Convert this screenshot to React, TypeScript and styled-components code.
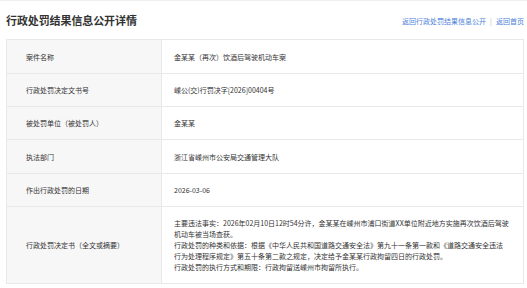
import styled, { createGlobalStyle } from "styled-components";

const GlobalStyle = createGlobalStyle`
    html, body {
        margin: 0;
        padding: 0;
        background: #ffffff;
    }
    body {
        font-family: "Noto Sans CJK SC", "Noto Sans", sans-serif;
        color: #333333;
    }
`

const Page = styled.div`
    width: 527px;
    height: 288px;
    box-sizing: border-box;
    border-top: 1px solid #f0f0f0;
    padding: 0 3px 0 6px;
    overflow: hidden;
`

const Header = styled.div`
    height: 38px;
    display: flex;
    align-items: center;
    justify-content: space-between;
`

const Title = styled.h1`
    margin: 0;
    font-size: 11px;
    font-weight: bold;
    color: #333333;
    letter-spacing: -0.1px;
`

const Links = styled.div`
    display: flex;
    align-items: center;
    font-size: 7px;
    color: #4d7fd9;
    padding-top: 2px;
`

const Link = styled.a`
    color: #4d7fd9;
    text-decoration: none;
`

const Sep = styled.span`
    color: #b0b0b0;
    margin: 0 4px;
`

const Table = styled.div`
    border-top: 1px solid #e9e9e9;
    border-left: 1px solid #e9e9e9;
    border-right: 1px solid #e9e9e9;
`

const Row = styled.div<{ $h: number }>`
    display: grid;
    grid-template-columns: 155px 1fr;
    height: ${p => p.$h}px;
    border-bottom: 1px solid #e9e9e9;
`

const Label = styled.div`
    background: #f7f7f7;
    border-right: 1px solid #e9e9e9;
    display: flex;
    align-items: center;
    padding-left: 19px;
    font-size: 7px;
    color: #333333;
`

const Value = styled.div`
    display: flex;
    align-items: center;
    padding: 0 14px 0 12px;
    font-size: 7px;
    color: #333333;
`

const Text = styled.div`
    line-height: 11px;
    font-size: 7px;
`

const rows = [
    { label: "案件名称", value: "金某某（再次）饮酒后驾驶机动车案", h: 33 },
    { label: "行政处罚决定文书号", value: "嵊公(交)行罚决字[2026]00404号", h: 32 },
    { label: "被处罚单位（被处罚人）", value: "金某某", h: 32 },
    { label: "执法部门", value: "浙江省嵊州市公安局交通管理大队", h: 33 },
    { label: "作出行政处罚的日期", value: "2026-03-06", h: 32 },
]

export default function App() {
    return (
        <>
            <GlobalStyle />
            <Page>
                <Header>
                    <Title>行政处罚结果信息公开详情</Title>
                    <Links>
                        <Link href="#">返回行政处罚结果信息公开</Link>
                        <Sep>|</Sep>
                        <Link href="#">返回首页</Link>
                    </Links>
                </Header>
                <Table>
                    {rows.map(r => (
                        <Row key={r.label} $h={r.h}>
                            <Label>{r.label}</Label>
                            <Value>{r.value}</Value>
                        </Row>
                    ))}
                    <Row $h={76}>
                        <Label>行政处罚决定书（全文或摘要）</Label>
                        <Value>
                            <Text>
                                主要违法事实：2026年02月10日12时54分许，金某某在嵊州市浦口街道XX单位附近地方实施再次饮酒后驾驶机动车被当场查获。<br />
                                行政处罚的种类和依据：根据《中华人民共和国道路交通安全法》第九十一条第一款和《道路交通安全违法行为处理程序规定》第五十条第二款之规定，决定给予金某某行政拘留四日的行政处罚。<br />
                                行政处罚的执行方式和期限：行政拘留送嵊州市拘留所执行。
                            </Text>
                        </Value>
                    </Row>
                </Table>
            </Page>
        </>
    )
}
